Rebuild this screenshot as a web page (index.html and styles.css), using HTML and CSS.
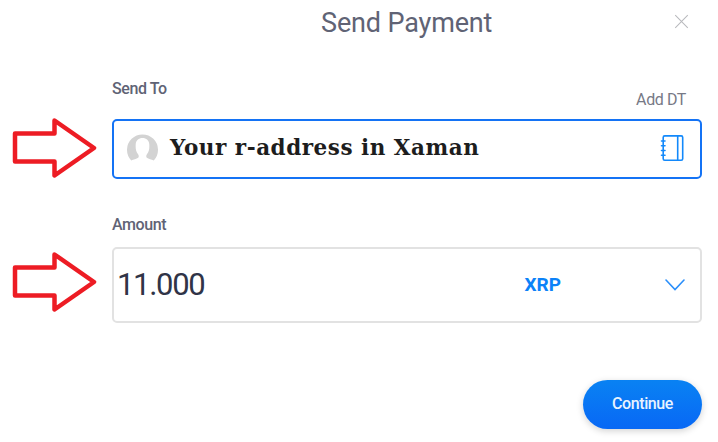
FILE: index.html
```html
<!DOCTYPE html>
<html lang="en">
<head>
<meta charset="utf-8">
<title>Send Payment</title>
<link rel="stylesheet" href="styles.css">
</head>
<body>
<main class="dialog">
  <header class="header">
    <h1 class="title">Send Payment</h1>
    <svg class="close" viewBox="0 0 16 16"><path d="M1.3 1.3 14.7 14.7M14.7 1.3 1.3 14.7"/></svg>
  </header>
  <div class="labels labels-to">
    <label class="label">Send To</label>
    <span class="add">Add DT</span>
  </div>
  <div class="row">
    <svg class="arrow arrow-to" viewBox="0 0 86 62"><path d="M4 16.500H43.500V3.500L83 31 43.500 58.500V44.500H4Z"/></svg>
    <div class="box box-to">
      <svg class="avatar" viewBox="0 0 31 28"><path d="M4.200 26.500A15.500 15.500 0 1 1 26.800 26.500C24.500 25.400 21.500 24.800 19.800 23.700C18.900 22.900 19.200 21.300 19.900 20.300C22.200 17.500 22.500 14 22.300 10.500C22.200 6.500 19.300 4 15.500 4S8.800 6.500 8.700 10.500C8.500 14 8.800 17.500 11.100 20.300C11.800 21.300 12.100 22.900 11.200 23.700C9.500 24.800 6.500 25.400 4.200 26.500Z"/></svg>
      <span class="address">Your r-address in Xaman</span>
      <svg class="book" viewBox="0 0 24 28"><rect x="3.200" y="1.900" width="19.500" height="24.300" rx="1.500"/><path d="M17.700 2V26M1.500 7H5M1.500 11.700H5M1.500 16.500H5M1.500 21.300H5"/></svg>
    </div>
  </div>
  <div class="labels labels-amount">
    <label class="label">Amount</label>
  </div>
  <div class="row">
    <svg class="arrow arrow-amount" viewBox="0 0 86 62"><path d="M4 16.500H43.500V3.500L83 31 43.500 58.500V44.500H4Z"/></svg>
    <div class="box box-amount">
      <span class="amount">11.000</span>
      <span class="currency">XRP</span>
      <svg class="chevron" viewBox="0 0 20 12"><path d="M1 1 10 10.500 19 1"/></svg>
    </div>
  </div>
  <button class="continue">Continue</button>
</main>
</body>
</html>
```

FILE: styles.css
```css
* { box-sizing: border-box; }
body { margin: 0; background: #fff; font-family: Roboto, sans-serif; color: #606375; overflow: hidden; }
.dialog { width: 718px; height: 442px; padding-right: 16px; display: flex; flex-direction: column; }
svg { fill: none; flex: none; display: block; }
.header { height: 46px; padding-left: 321px; padding-right: 13px; display: flex; align-items: center; justify-content: space-between; }
.title { margin: 0; font-size: 27px; line-height: 46px; font-weight: 400; letter-spacing: -.15px; white-space: nowrap; }
.close { width: 15px; height: 15px; margin-top: -4px; stroke: #b8b9bd; stroke-width: 1.1; }
.labels { padding-left: 112px; display: flex; justify-content: space-between; }
.labels-to { height: 73px; padding-top: 33px; padding-right: 16px; }
.labels-amount { height: 69px; padding-top: 36px; }
.label { font-size: 16px; line-height: 20px; font-weight: 500; letter-spacing: -.4px; }
.add { font-size: 16px; line-height: 20px; padding-top: 11px; color: #777986; letter-spacing: -.4px; }
.row { display: flex; align-items: flex-start; }
.arrow { width: 86px; height: 62px; margin-left: 11px; margin-right: 15px; stroke: #ed1c24; stroke-width: 4.5; stroke-linejoin: round; }
.arrow-to { margin-top: -2px; }
.arrow-amount { margin-top: 4px; margin-bottom: 9px; }
.box { width: 590px; display: flex; align-items: center; border-radius: 5px; }
.box-to { height: 60px; border: 2px solid #1473f5; padding: 0 16px 0 13px; }
.avatar { width: 31px; height: 28px; margin-top: -2px; fill: #d3d3d3; }
.address { width: 310px; margin-left: 12px; margin-right: auto; margin-top: -2px; font: bold 21.5px/28px "DejaVu Serif", serif; letter-spacing: .52px; color: #1d1d1d; white-space: nowrap; }
.book { width: 24px; height: 28px; margin-top: -2px; stroke: #1389fb; stroke-width: 1.6; stroke-linecap: round; }
.labels-amount + .row { margin-top: -1px; }
.box-amount { height: 76px; border: 2px solid #e2e2e2; padding: 0 15px 0 3px; }
.amount { font-size: 31px; letter-spacing: -1.3px; margin-top: -1px; color: #303447; }
.currency { margin-left: auto; margin-right: 104px; margin-top: -1px; font-size: 19px; font-weight: 700; color: #0c82f8; }
.chevron { width: 20px; height: 12px; margin-top: -1px; stroke: #2b8ffa; stroke-width: 1.6; stroke-linecap: round; }
.continue { align-self: flex-end; width: 119px; height: 49px; margin-top: 57px; padding: 0 0 1px; border: 0; border-radius: 25px; background: linear-gradient(#0982f3, #0868f5); box-shadow: 0 2px 7px rgba(0, 0, 0, .18); font: 500 16px/48px Roboto, sans-serif; letter-spacing: -.4px; color: #e8f3ff; }
```
